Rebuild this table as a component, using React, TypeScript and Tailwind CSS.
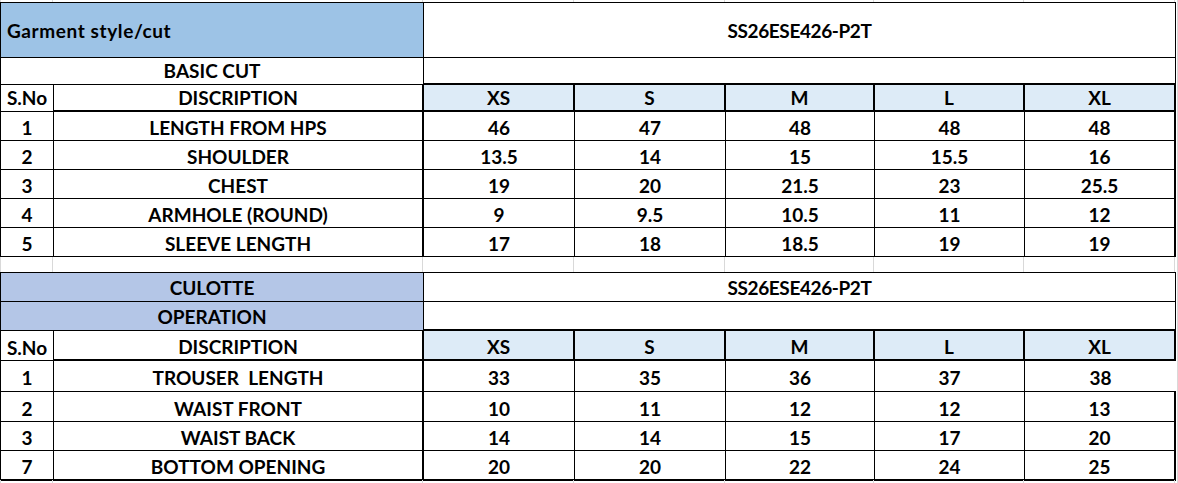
import type { ReactNode } from "react";

const COLS = "grid grid-cols-[53px_370px_151px_151px_149px_150px_151px]";
const SIZES = ["XS", "S", "M", "L", "XL"];

type Row = [number, string, ...(number | string)[]];

const basicCut: Row[] = [
  [1, "LENGTH FROM HPS", 46, 47, 48, 48, 48],
  [2, "SHOULDER", 13.5, 14, 15, 15.5, 16],
  [3, "CHEST", 19, 20, 21.5, 23, 25.5],
  [4, "ARMHOLE (ROUND)", 9, 9.5, 10.5, 11, 12],
  [5, "SLEEVE LENGTH", 17, 18, 18.5, 19, 19],
];

const culotte: Row[] = [
  [1, "TROUSER  LENGTH", 33, 35, 36, 37, 38],
  [2, "WAIST FRONT", 10, 11, 12, 12, 13],
  [3, "WAIST BACK", 14, 14, 15, 17, 20],
  [7, "BOTTOM OPENING", 20, 20, 22, 24, 25],
];

function Cell({
  className = "",
  pad = "pt-1",
  children,
}: {
  className?: string;
  pad?: string;
  children?: ReactNode;
}) {
  return (
    <div className={`flex items-center justify-center whitespace-pre border-black ${pad} ${className}`}>
      {children}
    </div>
  );
}

/** light spreadsheet gridlines outside the bordered area */
function GridTicks({ h }: { h: string }) {
  return (
    <div className={`${COLS} ${h}`}>
      <div className="border-l border-r border-[#d9d9d9]" />
      {[0, 1, 2, 3, 4, 5].map((i) => (
        <div key={i} className="border-r border-[#d9d9d9]" />
      ))}
    </div>
  );
}

function SizeHeader({ h, pad }: { h: string; pad: string }) {
  return (
    <div className={`${COLS} ${h}`}>
      <Cell pad={pad} className="border-r border-b">S.No</Cell>
      <Cell pad={pad} className="border-r-2 border-b-2">DISCRIPTION</Cell>
      {SIZES.map((s) => (
        <Cell key={s} pad={pad} className="border-r-2 border-b-2 bg-[#ddebf7]">
          {s}
        </Cell>
      ))}
    </div>
  );
}

function DataRows({ rows, heights, last }: { rows: Row[]; heights: string[]; last?: boolean }) {
  return (
    <>
      {rows.map((r, i) => {
        const isLast = last && i === rows.length - 1;
        const b = isLast ? "border-b-2" : "border-b";
        return (
          <div key={i} className={`${COLS} ${heights[i]}`}>
            <Cell className={`border-r ${b}`}>{r[0]}</Cell>
            <Cell className={`border-r-2 ${b}`}>{r[1]}</Cell>
            {r.slice(2).map((v, j) => (
              <Cell
                key={j}
                className={`${b} ${
                  j === 4 ? (last && i === 0 ? "" : "border-r-2") : "border-r"
                }`}
              >
                {v}
              </Cell>
            ))}
          </div>
        );
      })}
    </>
  );
}

export default function App() {
  return (
    <div className="flex w-[1178px] h-[483px] overflow-hidden bg-white font-['Lato',sans-serif] text-[19px] font-bold leading-tight text-black">
      <div className="w-[1176px] flex flex-col">
        <GridTicks h="h-[2px]" />

        {/* basic cut */}
        <div className="border-t border-l border-black">
          <div className={`${COLS} h-[55px]`}>
            <Cell
              pad="pt-px"
              className="col-span-2 justify-start pl-[6px] tracking-[0.6px] border-r border-b bg-[#9dc3e6]"
            >
              Garment style/cut
            </Cell>
            <Cell pad="pt-px" className="col-span-5 tracking-[-0.4px] border-r border-b">
              SS26ESE426-P2T
            </Cell>
          </div>
          <div className={`${COLS} h-[27px]`}>
            <Cell pad="pt-0" className="col-span-2 border-r border-b">BASIC CUT</Cell>
            <Cell pad="pt-0" className="col-span-5 border-r border-b-2" />
          </div>
          <SizeHeader h="h-[27px]" pad="pt-0" />
          <DataRows
            rows={basicCut}
            heights={["h-[29px]", "h-[29px]", "h-[29px]", "h-[29px]", "h-[29px]"]}
          />
        </div>

        <GridTicks h="h-[16px]" />

        {/* culotte */}
        <div className="border-t border-l border-black">
          <div className={`${COLS} h-[29px]`}>
            <Cell pad="pt-[2px]" className="col-span-2 border-r border-b bg-[#b4c6e7]">CULOTTE</Cell>
            <Cell pad="pt-[2px]" className="col-span-5 tracking-[-0.4px] border-r border-b">
              SS26ESE426-P2T
            </Cell>
          </div>
          <div className={`${COLS} h-[29px]`}>
            <Cell pad="pt-[2px]" className="col-span-2 border-r border-b bg-[#b4c6e7]">OPERATION</Cell>
            <Cell pad="pt-[2px]" className="col-span-5 border-r border-b-2" />
          </div>
          <SizeHeader h="h-[29px]" pad="pt-1" />
          <DataRows
            rows={culotte}
            heights={["h-[32px]", "h-[30px]", "h-[29px]", "h-[29px]"]}
            last
          />
        </div>

        <GridTicks h="h-[3px]" />
      </div>
      <div className="w-[2px] border-r border-[#d9d9d9]" />
    </div>
  );
}
